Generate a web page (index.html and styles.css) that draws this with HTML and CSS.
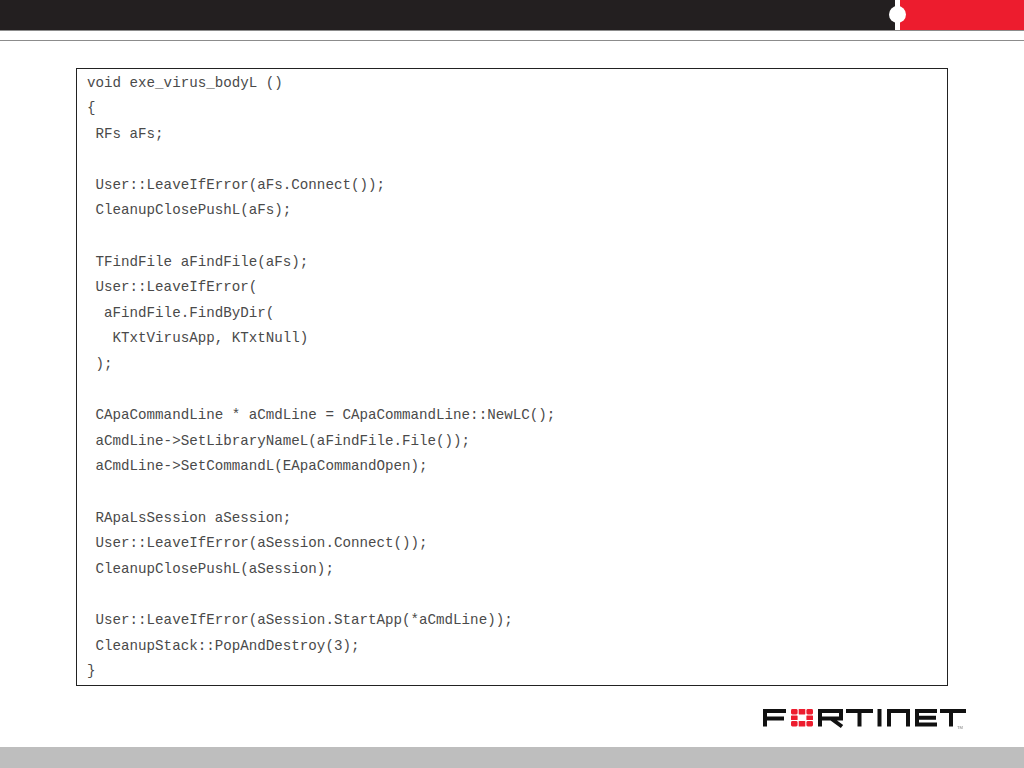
FILE: index.html
```html
<!DOCTYPE html>
<html lang="en">
<head>
<meta charset="utf-8">
<title>exe_virus_bodyL</title>
<link rel="stylesheet" href="styles.css">
</head>
<body>
<div class="slide">
  <header class="top">
    <div class="band">
      <div class="band-dark"></div>
      <div class="band-gap"></div>
      <div class="band-red"></div>
      <div class="dot"></div>
    </div>
    <div class="rule"></div>
  </header>
  <main class="content">
    <pre class="code">void exe_virus_bodyL ()
{
 RFs aFs;

 User::LeaveIfError(aFs.Connect());
 CleanupClosePushL(aFs);

 TFindFile aFindFile(aFs);
 User::LeaveIfError(
  aFindFile.FindByDir(
   KTxtVirusApp, KTxtNull)
 );

 CApaCommandLine * aCmdLine = CApaCommandLine::NewLC();
 aCmdLine-&gt;SetLibraryNameL(aFindFile.File());
 aCmdLine-&gt;SetCommandL(EApaCommandOpen);

 RApaLsSession aSession;
 User::LeaveIfError(aSession.Connect());
 CleanupClosePushL(aSession);

 User::LeaveIfError(aSession.StartApp(*aCmdLine));
 CleanupStack::PopAndDestroy(3);
}</pre>
  </main>
  <div class="logo-row">
    <svg class="logo" width="208" height="24" viewBox="0 0 208 24" role="img" aria-label="Fortinet logo">
      <g class="logo-strokes">
        <path d="M5 20.5V5H26M5 12.5H24"/>
        <path d="M60 20.5V5H81V12.5H60M71 12.5L82 20.5"/>
        <path d="M86 5H113M99.5 5V20.5"/>
        <path d="M119.5 3V20.5"/>
        <path d="M129 20.5V5H148V20.5"/>
        <path d="M177 5H157V18.5H177M157 11.8H176"/>
        <path d="M180 5H206M191 5V20.5"/>
      </g>
      <g class="logo-red">
        <rect x="31" y="3" width="6.6" height="5.4" rx="1.4"/>
        <rect x="38.7" y="3" width="6.6" height="5.4" rx="0.6"/>
        <rect x="46.4" y="3" width="6.6" height="5.4" rx="1.4"/>
        <rect x="31" y="9.4" width="6.6" height="4.6" rx="0.6"/>
        <rect x="46.4" y="9.4" width="6.6" height="4.6" rx="0.6"/>
        <rect x="31" y="15" width="6.6" height="5.5" rx="1.4"/>
        <rect x="38.7" y="15" width="6.6" height="5.5" rx="0.6"/>
        <rect x="46.4" y="15" width="6.6" height="5.5" rx="1.4"/>
      </g>
      <text class="logo-tm" x="197" y="22.5">TM</text>
    </svg>
  </div>
  <footer class="foot"></footer>
</div>
</body>
</html>
```
FILE: styles.css
```css
html, body {
  margin: 0;
  padding: 0;
  background: #fff;
}
.slide {
  width: 1024px;
  height: 768px;
  display: flex;
  flex-direction: column;
  overflow: hidden;
}
.top {
  height: 68px;
  flex: none;
}
.band {
  position: relative;
  display: flex;
  height: 30px;
  border-bottom: 1px solid #8c8c8c;
}
.band-dark {
  width: 895px;
  background: #231f20;
}
.band-gap {
  width: 5px;
  background: #fff;
}
.band-red {
  flex: 1;
  background: #ed1c2e;
}
.dot {
  position: absolute;
  left: 889px;
  top: 5.5px;
  width: 17px;
  height: 17px;
  border-radius: 50%;
  background: #fff;
}
.rule {
  margin-top: 9px;
  height: 1px;
  background: #8c8c8c;
}
.content {
  flex: none;
  padding-left: 76px;
}
.code {
  box-sizing: border-box;
  margin: 0;
  width: 872px;
  height: 618px;
  padding: 1.5px 10px 0;
  border: 1px solid #222;
  font-family: "Liberation Mono", monospace;
  font-size: 14.2px;
  line-height: 25.6px;
  color: #4a4a4a;
}
.logo-row {
  display: flex;
  justify-content: flex-end;
  padding: 20px 56px 0 0;
  height: 24px;
  flex: none;
}
.logo {
  filter: blur(0.35px);
}
.logo-strokes path {
  fill: none;
  stroke: #111;
  stroke-width: 4;
}
.logo-red {
  fill: #ed1c2e;
}
.logo-tm {
  font-family: "Liberation Sans", sans-serif;
  font-size: 4px;
  fill: #777;
}
.foot {
  margin-top: auto;
  height: 21px;
  background: #bebebe;
  flex: none;
}
```
